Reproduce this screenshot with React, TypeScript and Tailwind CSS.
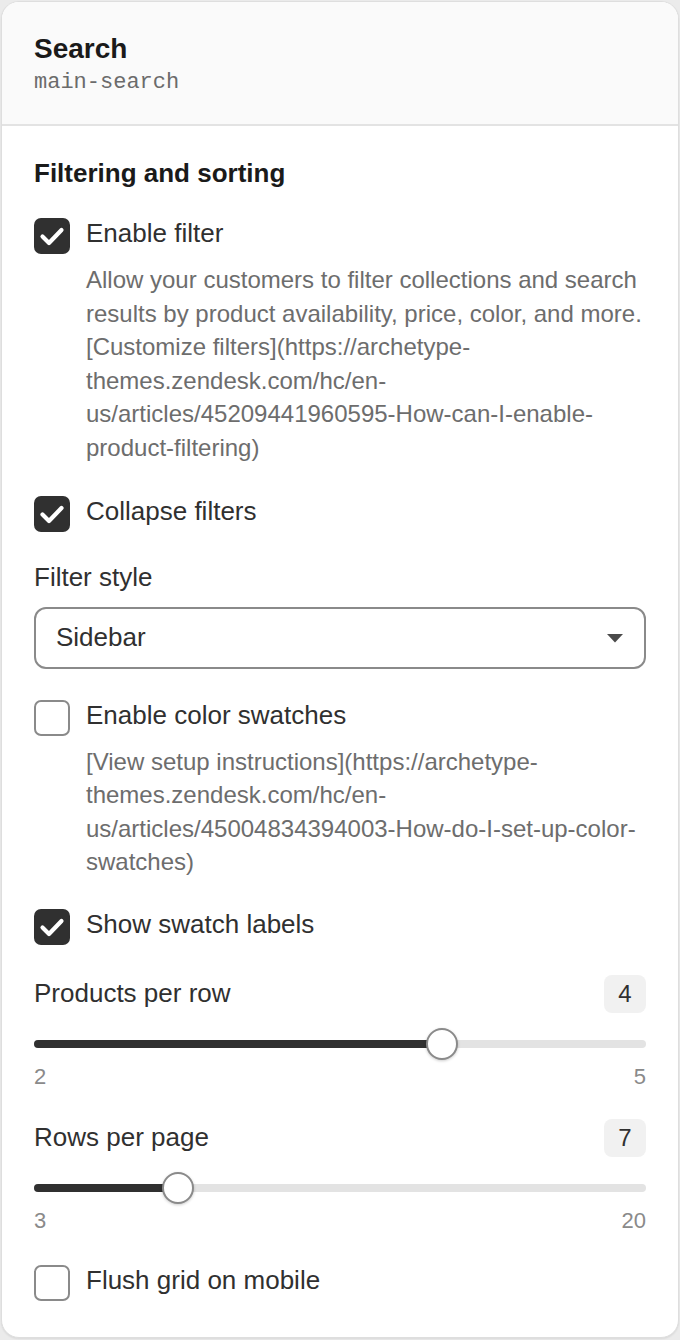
import React from "react";

function Check({ checked }: { checked: boolean }) {
  if (checked) {
    return (
      <div className="w-[36px] h-[36px] rounded-[7px] bg-[#303030] flex items-center justify-center shrink-0">
        <svg width="36" height="36" viewBox="0 0 36 36">
          <path d="M8.5 18.5 L15 25 L27.5 12" stroke="white" strokeWidth="4.2" fill="none" strokeLinecap="round" strokeLinejoin="round" />
        </svg>
      </div>
    );
  }
  return <div className="w-[36px] h-[36px] rounded-[7px] border-2 border-[#8a8a8a] bg-white shrink-0" />;
}

function CheckField({ label, checked, desc, className }: { label: string; checked: boolean; desc?: string; className: string }) {
  return (
    <div className={"flex items-start gap-[16px] " + className}>
      <Check checked={checked} />
      <div className="flex-1 min-w-0">
        <div className="text-[26px] leading-[31px] text-[#303030]">{label}</div>
        {desc && <div className="mt-[14px] text-[24px] leading-[33.6px] text-[#6d6d6d]">{desc}</div>}
      </div>
    </div>
  );
}

function SliderField({ label, value, min, max, className }: { label: string; value: number; min: number; max: number; className: string }) {
  const pct = ((value - min) / (max - min)) * 100;
  return (
    <div className={className}>
      <div className="flex items-center justify-between">
        <span className="text-[26px] leading-[31px] text-[#303030]">{label}</span>
        <span className="h-[38px] min-w-[42px] px-[12px] rounded-[8px] bg-[#f1f1f1] text-[24px] leading-[38px] text-[#303030] text-center">{value}</span>
      </div>
      <div className="relative mt-[15px] h-[32px] flex items-center">
        <div className="h-[8px] w-full rounded-full bg-[#e3e3e3] overflow-hidden">
          <div className="h-full bg-[#303030]" style={{ width: `${pct}%` }} />
        </div>
        <div
          className="absolute top-0 w-[32px] h-[32px] rounded-full bg-white border-2 border-[#8a8a8a] shadow-[0_1px_3px_rgba(0,0,0,0.2)]"
          style={{ left: `calc(${pct}% - 16px)` }}
        />
      </div>
      <div className="mt-[2px] flex justify-between text-[22px] leading-[30px] text-[#8a8a8a]">
        <span>{min}</span>
        <span>{max}</span>
      </div>
    </div>
  );
}

export default function App() {
  return (
    <div className="min-h-screen bg-[#ebebeb] p-px font-['Liberation_Sans',Arial,sans-serif]">
      <div className="bg-white border border-[#dedede] rounded-[18px] overflow-hidden shadow-[0_1px_2px_rgba(0,0,0,0.08)]">
        <div className="bg-[#fafafa] border-b-2 border-[#e3e3e3] px-[32px] pt-[30px] pb-[25px]">
          <div className="text-[28px] leading-[34px] font-bold text-[#1a1a1a]">Search</div>
          <div className="font-['Liberation_Mono',monospace] text-[22px] leading-[33px] text-[#6b6b6b]">main-search</div>
        </div>
        <div className="px-[32px] pt-[30px] pb-[36px]">
          <div className="text-[26px] leading-[34px] font-bold text-[#1a1a1a]">Filtering and sorting</div>
          <CheckField
            className="mt-[28px]"
            checked
            label="Enable filter"
            desc="Allow your customers to filter collections and search results by product availability, price, color, and more. [Customize filters](https://archetype-themes.zendesk.com/hc/en-us/articles/45209441960595-How-can-I-enable-product-filtering)"
          />
          <CheckField className="mt-[31px]" checked label="Collapse filters" />
          <div className="mt-[30px]">
            <div className="text-[26px] leading-[31px] text-[#303030]">Filter style</div>
            <div className="mt-[14px] h-[62px] rounded-[12px] border-2 border-[#8a8a8a] bg-white flex items-center justify-between pl-[20px] pr-[20px]">
              <span className="text-[26px] text-[#303030]">Sidebar</span>
              <svg width="18" height="10" viewBox="0 0 18 10">
                <polygon points="1,1 17,1 9,9.5" fill="#4a4a4a" />
              </svg>
            </div>
          </div>
          <CheckField
            className="mt-[31px]"
            checked={false}
            label="Enable color swatches"
            desc="[View setup instructions](https://archetype-themes.zendesk.com/hc/en-us/articles/45004834394003-How-do-I-set-up-color-swatches)"
          />
          <CheckField className="mt-[30px]" checked label="Show swatch labels" />
          <SliderField className="mt-[30px]" label="Products per row" value={4} min={2} max={5} />
          <SliderField className="mt-[27px]" label="Rows per page" value={7} min={3} max={20} />
          <CheckField className="mt-[29px]" checked={false} label="Flush grid on mobile" />
        </div>
      </div>
    </div>
  );
}
